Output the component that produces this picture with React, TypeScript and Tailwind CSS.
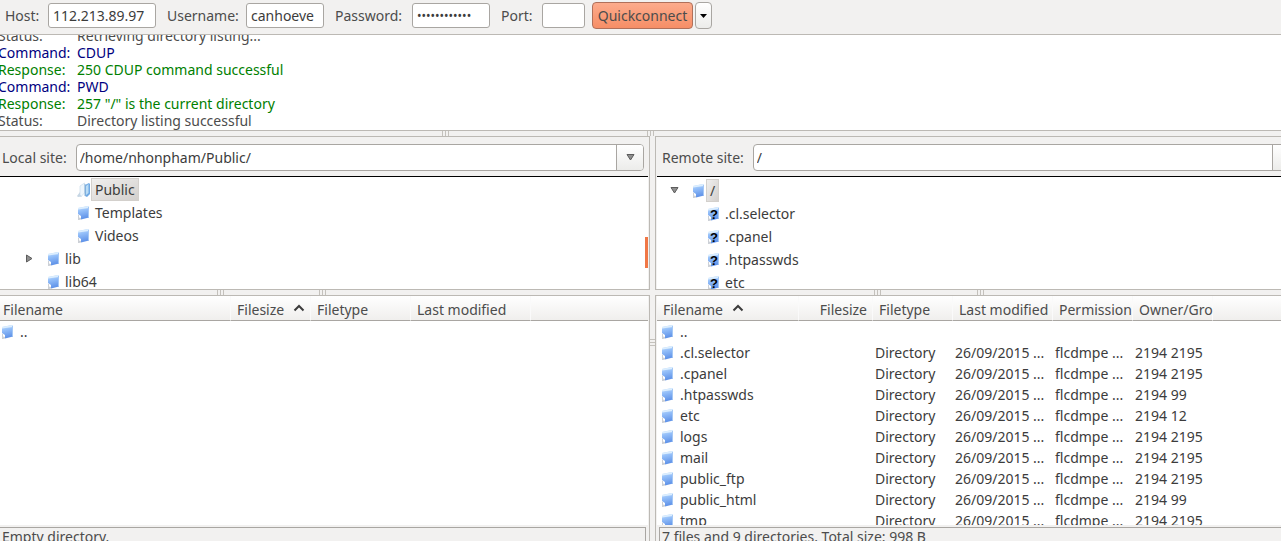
import React from "react";

type LogKind = "status" | "command" | "response";

interface LogLine {
  kind: LogKind;
  text: string;
}

interface Entry {
  name: string;
  type?: string;
  modified?: string;
  permissions?: string;
  owner?: string;
}

const log: LogLine[] = [
  { kind: "status", text: "Retrieving directory listing..." },
  { kind: "command", text: "CDUP" },
  { kind: "response", text: "250 CDUP command successful" },
  { kind: "command", text: "PWD" },
  { kind: "response", text: '257 "/" is the current directory' },
  { kind: "status", text: "Directory listing successful" },
];

const logStyle: Record<LogKind, { label: string; color: string }> = {
  status: { label: "Status:", color: "text-[#4c4c4c]" },
  command: { label: "Command:", color: "text-[#000080]" },
  response: { label: "Response:", color: "text-[#008000]" },
};

const directory = (name: string, owner: string): Entry => ({
  name,
  type: "Directory",
  modified: "26/09/2015 ...",
  permissions: "flcdmpe ...",
  owner,
});

const remoteFiles: Entry[] = [
  { name: ".." },
  directory(".cl.selector", "2194 2195"),
  directory(".cpanel", "2194 2195"),
  directory(".htpasswds", "2194 99"),
  directory("etc", "2194 12"),
  directory("logs", "2194 2195"),
  directory("mail", "2194 2195"),
  directory("public_ftp", "2194 2195"),
  directory("public_html", "2194 99"),
  directory("tmp", "2194 2195"),
];

const remoteTree = [".cl.selector", ".cpanel", ".htpasswds", "etc"];

const FolderIcon = ({ unknown = false }: { unknown?: boolean }) => (
  <svg width="12" height="16" viewBox="0 0 12 16" className="shrink-0" aria-hidden="true">
    <defs>
      <linearGradient id="folder" x1="0" y1="0" x2="0.2" y2="1">
        <stop offset="0" stopColor="#c9e2fc" />
        <stop offset="0.4" stopColor="#94bff9" />
        <stop offset="1" stopColor="#5f92e8" />
      </linearGradient>
    </defs>
    <path d="M0 3 L10 1 L11 1.5 V12.5 L3 14.5 V11 L0 9 Z" fill="url(#folder)" />
    <path d="M0 3 L10 1 L11 1.5 V3 L0 4.5 Z" fill="#dceefe" />
    <path d="M0 9.5 L1 10 V12.5 L3 13 V14.5 L1 15 H0 Z" fill="#ccd0d6" />
    <path d="M10.5 2 V12.5" stroke="#a5c8f5" strokeWidth="1" />
    {unknown && (
      <text
        x="6"
        y="13"
        textAnchor="middle"
        fill="#000"
        className="font-['Liberation_Sans',sans-serif] text-[13px] font-bold"
      >
        ?
      </text>
    )}
  </svg>
);

const OpenFolderIcon = () => (
  <svg width="14" height="16" viewBox="0 0 14 16" className="shrink-0" aria-hidden="true">
    <path d="M8 3 L12 1 L13 2 V12 L10 15 L8 14 Z" fill="#6fa9e4" />
    <path d="M9 4 L11.5 2 V11 L9 13 Z" fill="#b9dcf5" />
    <path d="M3 4 L7.5 1 V11 L4 14.5 L3 13 Z" fill="#eef6fc" stroke="#c3d8ea" strokeWidth="0.6" />
    <path d="M0 14 L3 10 V13 L5 14.5 L1 15 Z" fill="#c6d6e4" />
    <path d="M8 2 V14" stroke="#8fb6d8" strokeWidth="1" />
  </svg>
);

const Triangle = ({ open = false }: { open?: boolean }) => (
  <svg width="9" height="9" viewBox="0 0 9 9" className="shrink-0" aria-hidden="true">
    <path
      d={open ? "M1 1.5 H8 L4.5 7 Z" : "M1.5 1 V8 L7 4.5 Z"}
      fill="#8f8f8f"
      stroke="#5c5c5c"
    />
  </svg>
);

const SortArrow = () => (
  <svg width="12" height="8" viewBox="0 0 12 8" className="shrink-0" aria-hidden="true">
    <path d="M1.5 6.5 L6 2 L10.5 6.5" fill="none" stroke="#3c3c3c" strokeWidth="2" />
  </svg>
);

const Grip = () => (
  <span className="flex h-[5px] gap-[2px]">
    <span className="w-px bg-[#c4c1bc]" />
    <span className="w-px bg-[#c4c1bc]" />
    <span className="w-px bg-[#c4c1bc]" />
  </span>
);

// sash between stacked panes, with two grips
const Sash = ({ className }: { className: string }) => (
  <div className={`flex h-[5px] shrink-0 ${className}`}>
    <Grip />
    <Grip />
  </div>
);

const field =
  "h-[25px] rounded-[3px] border border-[#a9a6a2] bg-white px-[4px] text-[#3c3c3c] outline-none";

const QuickConnect = () => (
  <form
    className="flex h-[35px] shrink-0 items-center border-b border-[#bcb9b4] pb-[3px] pl-[5px]"
    onSubmit={(e) => e.preventDefault()}
  >
    <div className="flex w-[162px] items-center">
      <label htmlFor="host" className="w-[43px]">Host:</label>
      <input id="host" defaultValue="112.213.89.97" className={`${field} w-[108px]`} />
    </div>
    <div className="flex w-[168px] items-center">
      <label htmlFor="username" className="w-[79px]">Username:</label>
      <input id="username" defaultValue="canhoeve" className={`${field} w-[78px]`} />
    </div>
    <div className="flex w-[166px] items-center">
      <label htmlFor="password" className="w-[77px]">Password:</label>
      <input
        id="password"
        type="password"
        defaultValue="secretsecret"
        className={`${field} w-[78px] text-[12px]`}
      />
    </div>
    <div className="flex w-[91px] items-center">
      <label htmlFor="port" className="w-[41px]">Port:</label>
      <input id="port" className={`${field} w-[43px]`} />
    </div>
    <button
      type="submit"
      className="h-[27px] w-[101px] rounded-[4px] border border-[#b0705a] bg-linear-to-b from-[#fcab8c] to-[#f68e66]"
    >
      Quickconnect
    </button>
    <button
      type="button"
      aria-label="Recent servers"
      className="ml-[2px] flex h-[27px] w-[17px] items-center justify-center rounded-[4px] border border-[#a9a6a2] bg-linear-to-b from-white to-[#ececea]"
    >
      <svg width="7" height="4" viewBox="0 0 7 4" aria-hidden="true">
        <path d="M0 0 H7 L3.5 4 Z" fill="#000" />
      </svg>
    </button>
  </form>
);

const MessageLog = () => (
  <div className="flex h-[96px] shrink-0 flex-col justify-end overflow-hidden border-b border-[#bcb9b4] bg-white pb-px">
    {log.map((line, i) => (
      <div key={i} className={`flex h-[17px] shrink-0 leading-[17px] ${logStyle[line.kind].color}`}>
        <span className="-ml-[2px] w-[79px] shrink-0">{logStyle[line.kind].label}</span>
        <span>{line.text}</span>
      </div>
    ))}
  </div>
);

interface SiteBarProps {
  id: string;
  label: string;
  path: string;
  className: string;
}

const SiteBar = ({ id, label, path, className }: SiteBarProps) => (
  <div className={`flex h-[40px] shrink-0 items-center gap-[9px] border-b border-black pt-[2px] ${className}`}>
    <label htmlFor={id} className="shrink-0">{label}</label>
    <div className="flex h-[27px] min-w-0 flex-1 rounded-[4px] border border-[#a9a6a2] bg-white">
      <input
        id={id}
        defaultValue={path}
        className="min-w-0 flex-1 bg-transparent px-[3px] text-[#3c3c3c] outline-none"
      />
      <button
        type="button"
        aria-label={`${label} history`}
        className="flex w-[27px] shrink-0 items-center justify-center rounded-r-[3px] border-l border-[#a9a6a2] bg-linear-to-b from-white to-[#ececea]"
      >
        <Triangle open />
      </button>
    </div>
  </div>
);

const LocalTree = () => (
  <ul className="relative flex-1 overflow-hidden bg-white pt-[1px] text-[#3c3c3c]">
    <li className="flex h-[23px] items-center pl-[77px]">
      <OpenFolderIcon />
      <span className="h-[23px] border border-[#d3d0cc] bg-linear-to-br from-[#f0efee] to-[#d3d0cd] px-[3px] leading-[21px]">
        Public
      </span>
    </li>
    <li className="flex h-[23px] items-center gap-[5px] pl-[78px]"><FolderIcon />Templates</li>
    <li className="flex h-[23px] items-center gap-[5px] pl-[78px]"><FolderIcon />Videos</li>
    <li className="flex h-[23px] items-center gap-[14px] pl-[25px]">
      <Triangle />
      <span className="flex items-center gap-[5px]"><FolderIcon />lib</span>
    </li>
    <li className="flex h-[23px] items-center gap-[5px] pl-[48px]"><FolderIcon />lib64</li>
    <li aria-hidden="true" className="absolute right-0 top-[60px] h-[31px] w-[3px] bg-[#f07746]" />
  </ul>
);

const RemoteTree = () => (
  <ul className="flex-1 overflow-hidden bg-white pt-[2px] text-[#3c3c3c]">
    <li className="flex h-[23px] items-center gap-[14px] pl-[13px]">
      <Triangle open />
      <span className="flex items-center gap-px">
        <FolderIcon />
        <span className="h-[23px] w-[13px] border border-[#d3d0cc] bg-linear-to-br from-[#f0efee] to-[#d3d0cd] px-[3px] leading-[21px]">
          /
        </span>
      </span>
    </li>
    {remoteTree.map((name) => (
      <li key={name} className="flex h-[23px] items-center gap-[5px] pl-[51px]">
        <FolderIcon unknown />
        {name}
      </li>
    ))}
  </ul>
);

interface Column {
  label: string;
  width: string;
  field?: keyof Entry;
  sorted?: boolean;
  right?: boolean;
}

const localColumns: Column[] = [
  { label: "Filename", field: "name", width: "w-[231px]" },
  { label: "Filesize", width: "w-[80px]", sorted: true },
  { label: "Filetype", field: "type", width: "w-[100px]" },
  { label: "Last modified", field: "modified", width: "w-[120px]" },
];

const remoteColumns: Column[] = [
  { label: "Filename", field: "name", width: "w-[142px]", sorted: true },
  { label: "Filesize", width: "w-[74px]", right: true },
  { label: "Filetype", field: "type", width: "w-[80px]" },
  { label: "Last modified", field: "modified", width: "w-[100px]" },
  { label: "Permission", field: "permissions", width: "w-[80px]" },
  { label: "Owner/Gro", field: "owner", width: "w-[80px]" },
];

interface FileTableProps {
  columns: Column[];
  files: Entry[];
  headInset: string;
  rowInset: string;
}

const FileTable = ({ columns, files, headInset, rowInset }: FileTableProps) => (
  <div className="min-h-0 flex-1 overflow-hidden bg-white">
    <table className="w-full table-fixed border-separate border-spacing-0 text-[#3c3c3c]">
      <thead>
        <tr className="bg-linear-to-b from-white to-[#efeeec] text-[#4c4c4c]">
          {columns.map((col, i) => (
            <th
              key={col.label}
              className={`h-[25px] border-b border-b-[#a9a6a2] border-r border-r-[#fafafa] p-0 font-normal ${col.width} ${i === 0 ? headInset : "pl-[6px]"}`}
            >
              <div
                className={`flex items-center pt-[3px] whitespace-nowrap ${col.right ? "justify-end pr-[5px]" : ""} ${col.sorted ? "gap-[9px]" : ""}`}
              >
                {col.label}
                {col.sorted && (
                  <span className="pb-[4px]">
                    <SortArrow />
                  </span>
                )}
              </div>
            </th>
          ))}
          <th className="border-b border-[#a9a6a2] p-0" />
        </tr>
      </thead>
      <tbody>
        {files.map((file) => (
          <tr key={file.name} className="whitespace-nowrap">
            {columns.map((col, i) =>
              i === 0 ? (
                <td key={col.label} className={`h-[21px] p-0 ${rowInset}`}>
                  <div className="flex h-[21px] items-center gap-[6px]">
                    <FolderIcon />
                    {file.name}
                  </div>
                </td>
              ) : (
                <td key={col.label} className="p-0 pl-[2px]">
                  {col.field && file[col.field]}
                </td>
              )
            )}
            <td className="p-0" />
          </tr>
        ))}
      </tbody>
    </table>
  </div>
);

const StatusLine = ({ text, className }: { text: string; className: string }) => (
  <div className={`mt-[2px] h-[14px] shrink-0 overflow-hidden border-t border-[#a9a6a2] pl-[2px] leading-[18px] ${className}`}>
    {text}
  </div>
);

export default function App() {
  return (
    <div className="flex h-screen flex-col overflow-hidden bg-[#f2f1f0] font-['Noto_Sans','Open_Sans',sans-serif] text-[14px] leading-[20px] text-[#4c4c4c]">
      <QuickConnect />
      <MessageLog />
      <Sash className="gap-[198px] pl-[442px]" />

      <main className="flex min-h-0 flex-1">
        <div className="flex min-w-0 flex-[650] flex-col">
          <section className="flex h-[154px] shrink-0 flex-col border-y border-r border-[#bcb9b4] pr-px">
            <SiteBar id="local" label="Local site:" path="/home/nhonpham/Public/" className="pl-[2px] pr-[4px]" />
            <LocalTree />
          </section>
          <Sash className="gap-[95px] pl-[217px]" />
          <section className="flex min-h-0 flex-1 flex-col border-t border-r border-[#bcb9b4] pr-px">
            <FileTable columns={localColumns} files={[{ name: ".." }]} headInset="pl-[3px]" rowInset="pl-[2px]" />
            <StatusLine text="Empty directory." className="mr-[2px] border-r" />
          </section>
        </div>

        <div className="flex w-[5px] shrink-0 flex-col items-center justify-center gap-[2px] pt-[7px]">
          <span className="h-px w-[5px] bg-[#c4c1bc]" />
          <span className="h-px w-[5px] bg-[#c4c1bc]" />
          <span className="h-px w-[5px] bg-[#c4c1bc]" />
        </div>

        <div className="flex min-w-0 flex-[626] flex-col">
          <section className="flex h-[154px] shrink-0 flex-col overflow-hidden border-y border-l border-[#bcb9b4] pl-px">
            <SiteBar id="remote" label="Remote site:" path="/" className="-mr-[19px] pl-[5px]" />
            <RemoteTree />
          </section>
          <Sash className="gap-[96px] pl-[219px]" />
          <section className="flex min-h-0 flex-1 flex-col border-t border-l border-[#bcb9b4] pl-px">
            <FileTable columns={remoteColumns} files={remoteFiles} headInset="pl-[6px]" rowInset="pl-[5px]" />
            <StatusLine text="7 files and 9 directories. Total size: 998 B" className="ml-[2px] border-l" />
          </section>
        </div>
      </main>
    </div>
  );
}
